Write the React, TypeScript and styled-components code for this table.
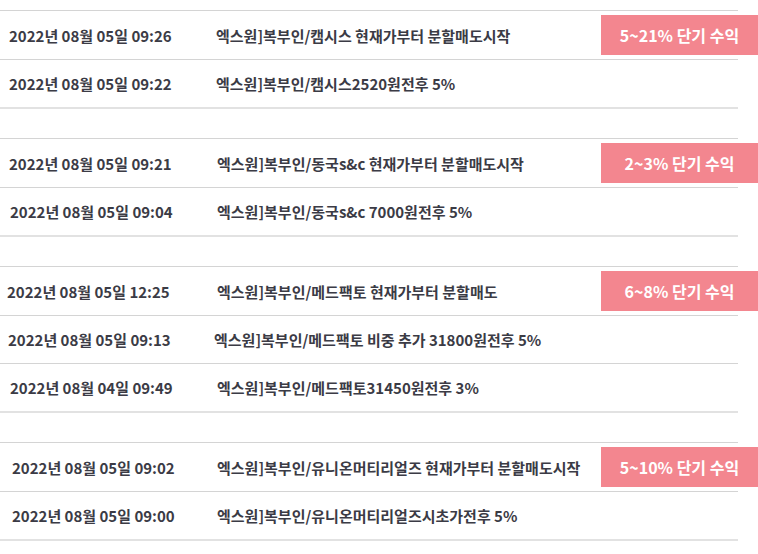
import styled, { createGlobalStyle } from 'styled-components';

const GlobalStyle = createGlobalStyle`
  body {
    margin: 0;
    background: #fff;
    font-family: "Noto Sans CJK KR", "Noto Sans", sans-serif;
  }
`;

interface Signal {
  date: string;
  title: string;
  dateX?: number;
  titleX?: number;
}

interface Group {
  badge: string;
  items: Signal[];
}

const groups: Group[] = [
  {
    badge: '5~21% 단기 수익',
    items: [
      { date: '2022년 08월 05일 09:26', title: '엑스원]복부인/캠시스 현재가부터 분할매도시작' },
      { date: '2022년 08월 05일 09:22', title: '엑스원]복부인/캠시스2520원전후 5%' },
    ],
  },
  {
    badge: '2~3% 단기 수익',
    items: [
      { date: '2022년 08월 05일 09:21', title: '엑스원]복부인/동국s&c 현재가부터 분할매도시작', titleX: 217 },
      { date: '2022년 08월 05일 09:04', title: '엑스원]복부인/동국s&c 7000원전후 5%', dateX: 10, titleX: 217 },
    ],
  },
  {
    badge: '6~8% 단기 수익',
    items: [
      { date: '2022년 08월 05일 12:25', title: '엑스원]복부인/메드팩토 현재가부터 분할매도', dateX: 7, titleX: 217 },
      { date: '2022년 08월 05일 09:13', title: '엑스원]복부인/메드팩토 비중 추가 31800원전후 5%', dateX: 8, titleX: 214 },
      { date: '2022년 08월 04일 09:49', title: '엑스원]복부인/메드팩토31450원전후 3%', dateX: 10, titleX: 217 },
    ],
  },
  {
    badge: '5~10% 단기 수익',
    items: [
      { date: '2022년 08월 05일 09:02', title: '엑스원]복부인/유니온머티리얼즈 현재가부터 분할매도시작', dateX: 12, titleX: 217 },
      { date: '2022년 08월 05일 09:00', title: '엑스원]복부인/유니온머티리얼즈시초가전후 5%', dateX: 12, titleX: 217 },
    ],
  },
];

const Page = styled.div`
  width: 738px;
  padding-top: 10px;
  display: flex;
  flex-direction: column;
  gap: 29px;
`;

const Block = styled.section`
  border-top: 1px solid #d4d4d4;
  border-bottom: 2px solid #e2e2e2;
`;

const Row = styled.div<{ $first: boolean }>`
  display: flex;
  align-items: center;
  height: ${(p) => (p.$first ? 48 : 47)}px;
  & + & {
    border-top: 1px solid #d4d4d4;
  }
`;

const DateCell = styled.div<{ $x: number }>`
  width: 216px;
  flex-shrink: 0;
  box-sizing: border-box;
  padding-left: ${(p) => p.$x}px;
  font-size: 15px;
  font-weight: 700;
  color: #3b3b45;
  white-space: nowrap;
`;

const TitleCell = styled.div<{ $dx: number }>`
  flex: 1;
  margin-left: ${(p) => p.$dx}px;
  font-size: 15px;
  font-weight: 700;
  color: #3b3b45;
  white-space: nowrap;
`;

const Badge = styled.div`
  width: 157px;
  height: 40px;
  margin-right: -20px;
  flex-shrink: 0;
  display: flex;
  align-items: center;
  justify-content: center;
  background: #f3868f;
  color: #fff;
  font-size: 16px;
  font-weight: 700;
`;

export default function App() {
  return (
    <>
      <GlobalStyle />
      <Page>
        {groups.map((g) => (
          <Block key={g.badge}>
            {g.items.map((s, i) => (
              <Row key={s.date + s.title} $first={i === 0}>
                <DateCell $x={s.dateX ?? 9}>{s.date}</DateCell>
                <TitleCell $dx={(s.titleX ?? 216) - 216}>{s.title}</TitleCell>
                {i === 0 && <Badge>{g.badge}</Badge>}
              </Row>
            ))}
          </Block>
        ))}
      </Page>
    </>
  );
}
